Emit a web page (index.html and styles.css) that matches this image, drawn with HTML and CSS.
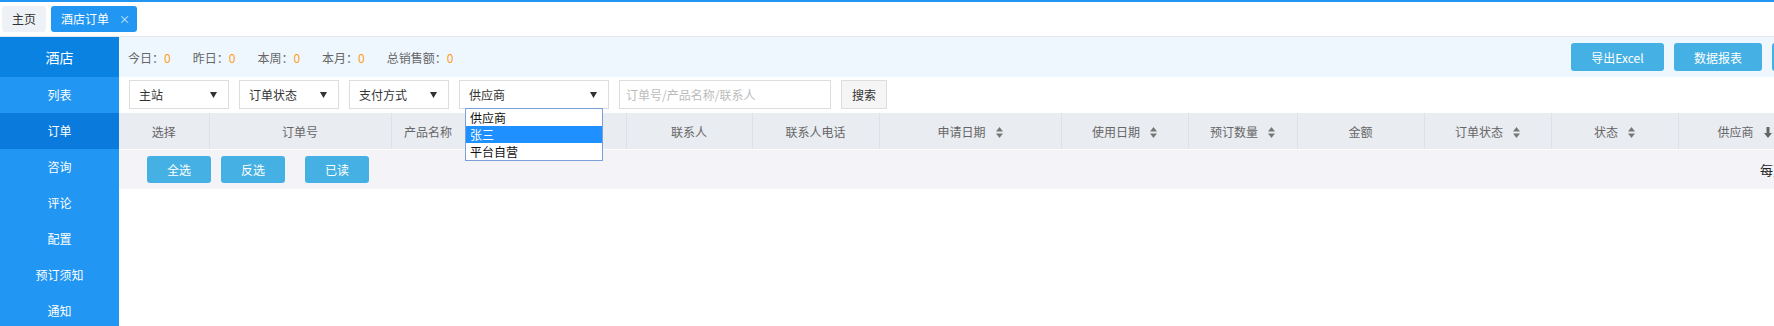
FILE: index.html
```html
<!DOCTYPE html>
<html>

<head>
    <meta charset="utf-8">
    <meta name='viewport' content='width=device-width, initial-scale=1'>
    <title>酒店订单</title>
    <link rel="stylesheet" href="styles.css">
</head>

<body>
    <div class="topline"></div>
    <div class="tabbar">
        <span class="tab">主页</span>
        <span class="tab active">酒店订单<i class="close">×</i></span>
    </div>
    <div class="layout">
        <nav class="sidebar">
            <div class="side-title">酒店</div>
            <a class="side-item">列表</a>
            <a class="side-item current">订单</a>
            <a class="side-item">咨询</a>
            <a class="side-item">评论</a>
            <a class="side-item">配置</a>
            <a class="side-item">预订须知</a>
            <a class="side-item">通知</a>
        </nav>
        <main class="main">
            <div class="stats">
                <span class="stat">今日：<b>0</b></span>
                <span class="stat">昨日：<b>0</b></span>
                <span class="stat">本周：<b>0</b></span>
                <span class="stat">本月：<b>0</b></span>
                <span class="stat">总销售额：<b>0</b></span>
                <div class="tools">
                    <button class="btn btn-excel">导出Excel</button>
                    <button class="btn btn-report">数据报表</button>
                    <button class="btn btn-report">打印订单</button>
                </div>
            </div>
            <div class="filters">
                <div class="select"><span>主站</span><svg class="caret" viewBox="0 0 7 6"><polygon points="0,0 7,0 3.5,6" /></svg></div>
                <div class="select"><span>订单状态</span><svg class="caret" viewBox="0 0 7 6"><polygon points="0,0 7,0 3.5,6" /></svg></div>
                <div class="select"><span>支付方式</span><svg class="caret" viewBox="0 0 7 6"><polygon points="0,0 7,0 3.5,6" /></svg></div>
                <div class="select select-wide"><span>供应商</span><svg class="caret" viewBox="0 0 7 6"><polygon points="0,0 7,0 3.5,6" /></svg>
                    <ul class="options">
                        <li>供应商</li>
                        <li class="hover">张三</li>
                        <li>平台自营</li>
                    </ul>
                </div>
                <input class="search-input" type="text" placeholder="订单号/产品名称/联系人">
                <button class="search-btn">搜索</button>
            </div>
            <table class="grid">
                <colgroup>
                    <col style="width:90px"><col style="width:182px"><col style="width:74px"><col style="width:161px">
                    <col style="width:126px"><col style="width:127px"><col style="width:182px"><col style="width:127px">
                    <col style="width:109px"><col style="width:127px"><col style="width:127px"><col style="width:127px">
                    <col style="width:127px">
                </colgroup>
                <thead>
                    <tr>
                        <th>选择</th>
                        <th>订单号</th>
                        <th>产品名称</th>
                        <th>产品类型</th>
                        <th>联系人</th>
                        <th>联系人电话</th>
                        <th>申请日期<svg class="sort" viewBox="0 0 7 11"><polygon points="0,4.5 3.5,0 7,4.5" /><polygon points="0,6.5 3.5,11 7,6.5" /></svg></th>
                        <th>使用日期<svg class="sort" viewBox="0 0 7 11"><polygon points="0,4.5 3.5,0 7,4.5" /><polygon points="0,6.5 3.5,11 7,6.5" /></svg></th>
                        <th>预订数量<svg class="sort" viewBox="0 0 7 11"><polygon points="0,4.5 3.5,0 7,4.5" /><polygon points="0,6.5 3.5,11 7,6.5" /></svg></th>
                        <th>金额</th>
                        <th>订单状态<svg class="sort" viewBox="0 0 7 11"><polygon points="0,4.5 3.5,0 7,4.5" /><polygon points="0,6.5 3.5,11 7,6.5" /></svg></th>
                        <th>状态<svg class="sort" viewBox="0 0 7 11"><polygon points="0,4.5 3.5,0 7,4.5" /><polygon points="0,6.5 3.5,11 7,6.5" /></svg></th>
                        <th class="th-last">供应商<svg class="sort sort-down" viewBox="0 0 8 11"><path d="M2.5 0h3v6h2.5l-4 5-4-5h2.5z" /></svg></th>
                    </tr>
                </thead>
            </table>
            <div class="actions">
                <button class="btn btn-small">全选</button>
                <button class="btn btn-small">反选</button>
                <button class="btn btn-small btn-read">已读</button>
                <span class="pager">每页显示 20 条</span>
            </div>
        </main>
    </div>
</body>

</html>
```
FILE: styles.css
```css
html {
    overflow: hidden;
}

body {
    margin: 0;
    font-family: "Noto Sans CJK SC", "Microsoft YaHei", sans-serif;
    font-size: 12px;
    color: #333;
    background: #fff;
}

.topline {
    height: 2px;
    background: #2196f3;
}

.tabbar {
    height: 35px;
    padding: 4px 0 0 2px;
    box-sizing: border-box;
    border-bottom: 1px solid #e3e6ea;
    display: flex;
    gap: 5px;
}

.tab {
    height: 26px;
    line-height: 26px;
    padding: 0 10px;
    border-radius: 3px;
    background: #eef1f6;
    color: #333;
}

.tab.active {
    background: #2196f3;
    color: #fff;
    padding-right: 7px;
}

.close {
    font-style: normal;
    margin-left: 10px;
    font-size: 11px;
    color: #dbeafc;
}

.layout {
    display: flex;
    width: 1879px;
}

.sidebar {
    width: 119px;
    flex-shrink: 0;
    background: #2196f3;
    display: flex;
    flex-direction: column;
    height: 300px;
}

.side-title {
    height: 40px;
    line-height: 40px;
    text-align: center;
    color: #fff;
    font-size: 14px;
    background: #0a82e2;
}

.side-item {
    height: 36px;
    line-height: 36px;
    text-align: center;
    color: #fff;
}

.side-item.current {
    background: #0a7bdc;
}

.main {
    flex: 1;
    min-width: 0;
}

.stats {
    height: 40px;
    display: flex;
    align-items: center;
    padding: 0 19px 0 9px;
    background: #eff7fe;
    color: #666;
}

.stat {
    margin-right: 22px;
}

.stat b {
    font-weight: normal;
    color: #ff9c1a;
}

.tools {
    margin-left: auto;
    display: flex;
    gap: 10px;
}

.btn {
    border: none;
    border-radius: 3px;
    background: #45b0e3;
    color: #fff;
    font-family: inherit;
    font-size: 12px;
    height: 28px;
    padding: 0;
}

.btn-excel {
    width: 93px;
}

.btn-report {
    width: 88px;
}

.filters {
    height: 36px;
    display: flex;
    gap: 10px;
    padding: 3px 0 0 10px;
    box-sizing: border-box;
}

.select {
    position: relative;
    width: 100px;
    height: 29px;
    box-sizing: border-box;
    border: 1px solid #ddd;
    display: flex;
    align-items: center;
    padding: 0 11px 0 9px;
    color: #333;
}

.select-wide {
    width: 150px;
}

.caret {
    width: 7px;
    height: 6px;
    margin-left: auto;
    fill: #333;
}

.options {
    position: absolute;
    left: 5px;
    top: 27px;
    width: 138px;
    box-sizing: border-box;
    margin: 0;
    padding: 0;
    list-style: none;
    background: #fff;
    border: 1px solid #7b9fd6;
    z-index: 2;
}

.options li {
    height: 17px;
    line-height: 17px;
    padding-left: 4px;
    color: #111;
    font-size: 12px;
}

.options li.hover {
    background: #1e90ff;
    color: #fff;
}

.search-input {
    width: 212px;
    height: 29px;
    box-sizing: border-box;
    border: 1px solid #ddd;
    padding: 0 6px;
    font-family: inherit;
    font-size: 12px;
    outline: none;
}

.search-input::placeholder {
    color: #bbb;
}

.search-btn {
    width: 46px;
    height: 29px;
    border: 1px solid #ddd;
    background: #f5f5f5;
    font-family: inherit;
    font-size: 12px;
    color: #333;
    padding: 0;
}

.grid {
    table-layout: fixed;
    border-collapse: collapse;
    width: 1686px;
}

.grid th {
    height: 36px;
    padding: 0;
    font-weight: normal;
    color: #666;
    background: #e9ecf1;
    border-right: 1px solid #dde1e7;
    border-bottom: 1px solid #fff;
    white-space: nowrap;
}

.grid th.th-last {
    padding-left: 6px;
}

.sort {
    width: 7px;
    height: 11px;
    margin-left: 10px;
    vertical-align: -1px;
    fill: #777;
}

.sort-down {
    width: 8px;
    fill: #666;
}

.actions {
    height: 39px;
    display: flex;
    align-items: center;
    gap: 10px;
    padding: 0 9px 0 28px;
    background: #f4f4f8;
}

.btn-small {
    width: 64px;
    height: 27px;
}

.btn-read {
    margin-left: 10px;
}

.pager {
    margin-left: auto;
    width: 110px;
    font-size: 13px;
    color: #222;
    white-space: nowrap;
    overflow: hidden;
}
```
